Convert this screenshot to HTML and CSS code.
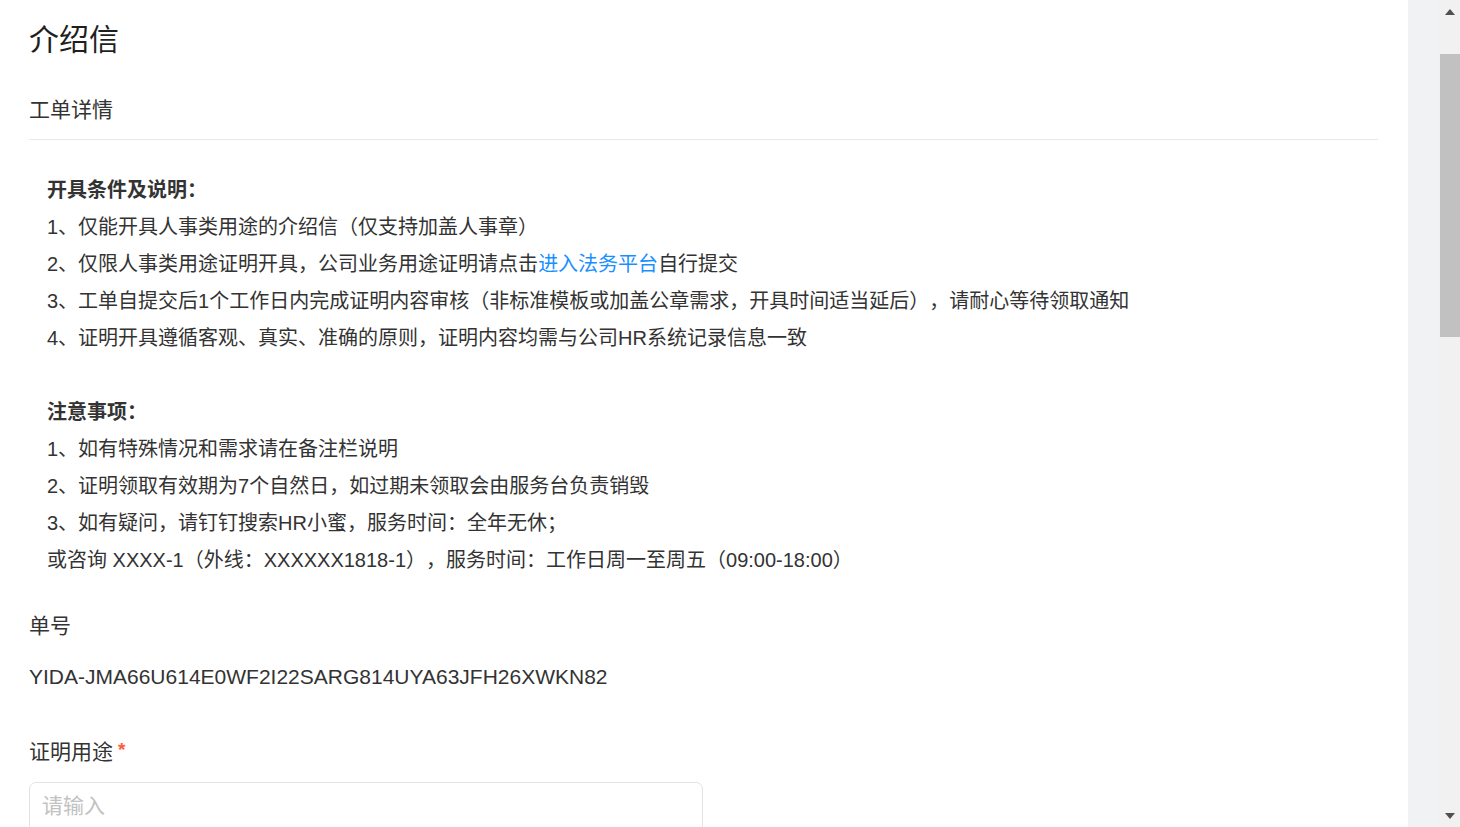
FILE: index.html
```html
<!DOCTYPE html>
<html lang="zh-CN">
<head>
<meta charset="utf-8">
<title>介绍信</title>
<link rel="stylesheet" href="styles.css">
</head>
<body>
<div class="frame">
  <main class="page">
    <h1 class="title">介绍信</h1>
    <div class="section-title">工单详情</div>
    <div class="notice">
      <p class="strong">开具条件及说明：</p>
      <p>1、仅能开具人事类用途的介绍信（仅支持加盖人事章）</p>
      <p>2、仅限人事类用途证明开具，公司业务用途证明请点击<a class="link" href="#">进入法务平台</a>自行提交</p>
      <p>3、工单自提交后1个工作日内完成证明内容审核（非标准模板或加盖公章需求，开具时间适当延后），请耐心等待领取通知</p>
      <p>4、证明开具遵循客观、真实、准确的原则，证明内容均需与公司HR系统记录信息一致</p>
      <p class="blank">&nbsp;</p>
      <p class="strong">注意事项：</p>
      <p>1、如有特殊情况和需求请在备注栏说明</p>
      <p>2、证明领取有效期为7个自然日，如过期未领取会由服务台负责销毁</p>
      <p>3、如有疑问，请钉钉搜索HR小蜜，服务时间：全年无休；</p>
      <p>或咨询 XXXX-1（外线：XXXXXX1818-1），服务时间：工作日周一至周五（09:00-18:00）</p>
    </div>
    <div class="field">
      <div class="label">单号</div>
      <div class="value">YIDA-JMA66U614E0WF2I22SARG814UYA63JFH26XWKN82</div>
    </div>
    <div class="field field-input">
      <div class="label">证明用途<span class="req">*</span></div>
      <div class="input"><span class="placeholder">请输入</span></div>
    </div>
  </main>
  <div class="strip"></div>
  <div class="scrollbar">
    <div class="arrow arrow-up"></div>
    <div class="track"><div class="thumb"></div></div>
    <div class="arrow arrow-down"></div>
  </div>
</div>
</body>
</html>
```

FILE: styles.css
```css
* { box-sizing: border-box; }
html, body {
  margin: 0;
  padding: 0;
  height: 100%;
  overflow: hidden;
  background: #fff;
}
body {
  font-family: "Liberation Sans", "Noto Sans CJK SC", sans-serif;
  color: #333;
  text-spacing-trim: space-all;
}
.frame {
  display: flex;
  height: 827px;
  width: 1460px;
}
.page {
  flex: 1;
  min-width: 0;
  padding: 0 30px 0 29px;
  overflow: hidden;
  background: #fff;
}
.title {
  margin: 0;
  padding-top: 16px;
  font-family: "Noto Sans CJK SC", sans-serif;
  font-size: 30px;
  line-height: 42px;
  font-weight: 400;
  color: #1f1f1f;
}
.section-title {
  margin-top: 37px;
  font-size: 21px;
  line-height: 30px;
  color: #333;
  padding-bottom: 14px;
  border-bottom: 1px solid #e8e8e8;
}
.notice {
  padding: 32px 0 0 18px;
}
.notice p {
  margin: 0;
  font-size: 20px;
  line-height: 37px;
  color: #333;
  white-space: nowrap;
}
.notice p.strong {
  font-weight: 700;
}
.link {
  color: #1890ff;
  text-decoration: none;
}
.field {
  margin-top: 32px;
}
.label {
  font-size: 21px;
  line-height: 30px;
  color: #333;
}
.value {
  margin-top: 21px;
  font-size: 21px;
  line-height: 30px;
  color: #333;
}
.field-input {
  margin-top: 45px;
}
.req {
  color: #ff5a3c;
  font-size: 19px;
  font-weight: 700;
  margin-left: 5px;
  vertical-align: top;
  line-height: 26px;
}
.input {
  margin-top: 15px;
  width: 674px;
  height: 50px;
  border: 1px solid #e3e3e3;
  border-radius: 7px;
  padding: 10px 12px;
}
.placeholder {
  font-size: 21px;
  line-height: 26px;
  color: #c2c2c2;
}
.strip {
  width: 30px;
  flex: none;
  background: #f1f2f4;
}
.scrollbar {
  width: 22px;
  flex: none;
  background: #f1f1f1;
  display: flex;
  flex-direction: column;
}
.arrow {
  height: 22px;
  flex: none;
  position: relative;
}
.arrow::after {
  content: "";
  position: absolute;
  left: 7px;
  width: 0;
  height: 0;
  border-left: 5px solid transparent;
  border-right: 5px solid transparent;
}
.arrow-up::after {
  top: 9px;
  border-bottom: 6px solid #505050;
}
.arrow-down::after {
  top: 8px;
  border-top: 6px solid #505050;
}
.track {
  flex: 1;
  padding: 32px 0 0 2px;
}
.thumb {
  height: 283px;
  background: #c1c1c1;
}
```
